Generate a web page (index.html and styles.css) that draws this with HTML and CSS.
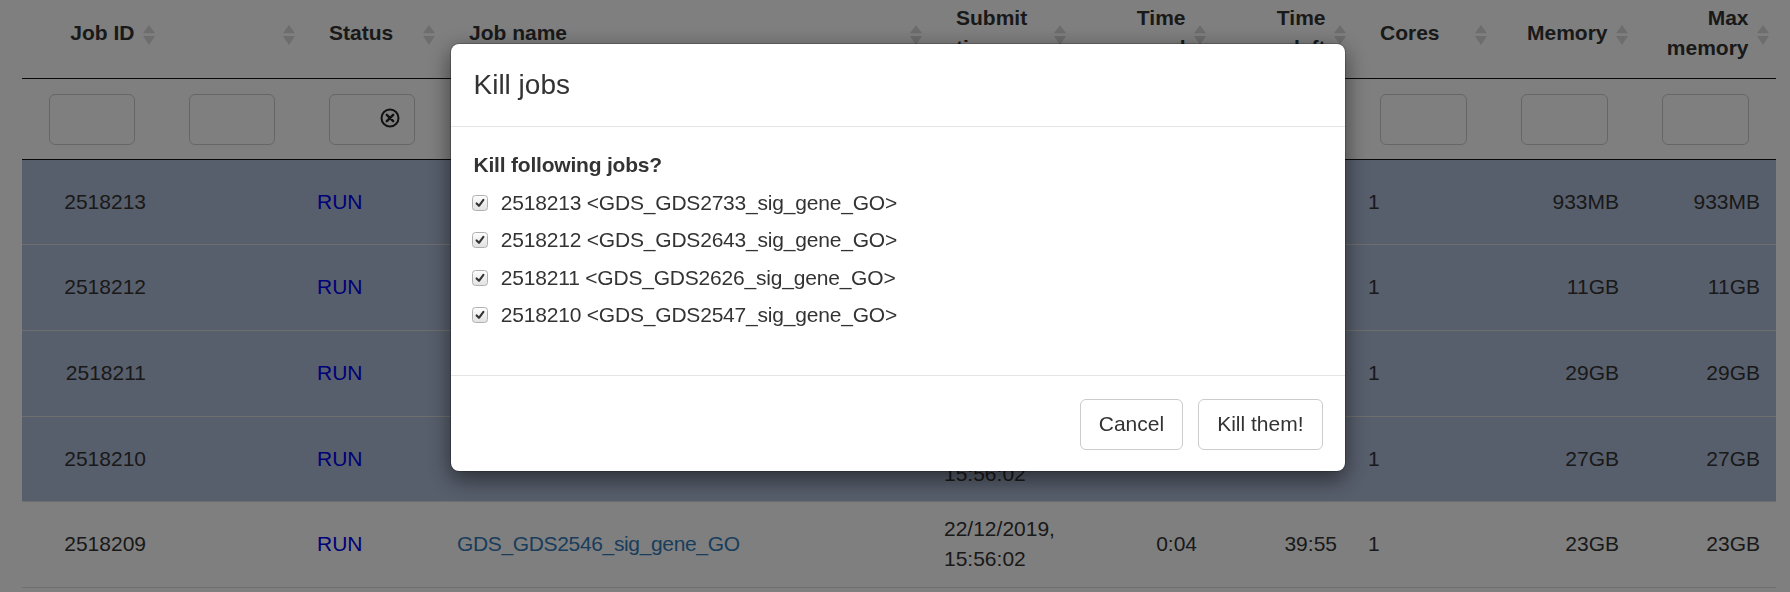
FILE: index.html
```html
<!DOCTYPE html>
<html lang="en">
<head>
<meta charset="utf-8">
<title>Jobs</title>
<link rel="stylesheet" href="styles.css">
</head>
<body>
<div class="page">
  <table class="jobs">
    <colgroup>
      <col style="width:140px"><col style="width:140px"><col style="width:140px"><col style="width:487px"><col style="width:144px"><col style="width:140px"><col style="width:140px"><col style="width:141px"><col style="width:141px"><col style="width:141px">
    </colgroup>
    <thead>
      <tr class="head-row">
        <th><div class="th-inner"><span class="th-label right">Job ID</span><svg class="sort-icon" viewBox="0 0 12 20"><polygon points="6,0 12,8.3 0,8.3"/><polygon points="0,11 12,11 6,20"/></svg></div></th>
        <th><div class="th-inner"><span class="th-label"></span><svg class="sort-icon" viewBox="0 0 12 20"><polygon points="6,0 12,8.3 0,8.3"/><polygon points="0,11 12,11 6,20"/></svg></div></th>
        <th><div class="th-inner"><span class="th-label">Status</span><svg class="sort-icon" viewBox="0 0 12 20"><polygon points="6,0 12,8.3 0,8.3"/><polygon points="0,11 12,11 6,20"/></svg></div></th>
        <th><div class="th-inner"><span class="th-label">Job name</span><svg class="sort-icon" viewBox="0 0 12 20"><polygon points="6,0 12,8.3 0,8.3"/><polygon points="0,11 12,11 6,20"/></svg></div></th>
        <th><div class="th-inner"><span class="th-label">Submit<br>time</span><svg class="sort-icon" viewBox="0 0 12 20"><polygon points="6,0 12,8.3 0,8.3"/><polygon points="0,11 12,11 6,20"/></svg></div></th>
        <th><div class="th-inner"><span class="th-label right">Time<br>used</span><svg class="sort-icon" viewBox="0 0 12 20"><polygon points="6,0 12,8.3 0,8.3"/><polygon points="0,11 12,11 6,20"/></svg></div></th>
        <th><div class="th-inner"><span class="th-label right">Time<br>left</span><svg class="sort-icon" viewBox="0 0 12 20"><polygon points="6,0 12,8.3 0,8.3"/><polygon points="0,11 12,11 6,20"/></svg></div></th>
        <th><div class="th-inner"><span class="th-label">Cores</span><svg class="sort-icon" viewBox="0 0 12 20"><polygon points="6,0 12,8.3 0,8.3"/><polygon points="0,11 12,11 6,20"/></svg></div></th>
        <th><div class="th-inner"><span class="th-label right">Memory</span><svg class="sort-icon" viewBox="0 0 12 20"><polygon points="6,0 12,8.3 0,8.3"/><polygon points="0,11 12,11 6,20"/></svg></div></th>
        <th><div class="th-inner"><span class="th-label right">Max<br>memory</span><svg class="sort-icon" viewBox="0 0 12 20"><polygon points="6,0 12,8.3 0,8.3"/><polygon points="0,11 12,11 6,20"/></svg></div></th>
      </tr>
      <tr class="filter-row">
        <th><input class="filter-input" type="text"></th>
        <th><input class="filter-input" type="text"></th>
        <th><div class="filter-input filter-clear"><svg class="clear-icon" viewBox="0 0 20 20"><circle cx="10" cy="10" r="8.5"/><path d="M6.8 6.8 L13.2 13.2 M13.2 6.8 L6.8 13.2"/></svg></div></th>
        <th></th>
        <th></th>
        <th></th>
        <th></th>
        <th><input class="filter-input" type="text"></th>
        <th><input class="filter-input" type="text"></th>
        <th><input class="filter-input" type="text"></th>
      </tr>
    </thead>
    <tbody>
      <tr class="selected">
        <td class="num">2518213</td><td></td><td class="run">RUN</td><td><a class="job" href="#">GDS_GDS2733_sig_gene_GO</a></td><td>22/12/2019,<br>15:56:02</td><td class="num">0:04</td><td class="num">39:55</td><td>1</td><td class="num">933MB</td><td class="num">933MB</td>
      </tr>
      <tr class="selected">
        <td class="num">2518212</td><td></td><td class="run">RUN</td><td><a class="job" href="#">GDS_GDS2643_sig_gene_GO</a></td><td>22/12/2019,<br>15:56:02</td><td class="num">0:04</td><td class="num">39:55</td><td>1</td><td class="num">11GB</td><td class="num">11GB</td>
      </tr>
      <tr class="selected">
        <td class="num">2518211</td><td></td><td class="run">RUN</td><td><a class="job" href="#">GDS_GDS2626_sig_gene_GO</a></td><td>22/12/2019,<br>15:56:02</td><td class="num">0:04</td><td class="num">39:55</td><td>1</td><td class="num">29GB</td><td class="num">29GB</td>
      </tr>
      <tr class="selected">
        <td class="num">2518210</td><td></td><td class="run">RUN</td><td><a class="job" href="#">GDS_GDS2547_sig_gene_GO</a></td><td>22/12/2019,<br>15:56:02</td><td class="num">0:04</td><td class="num">39:55</td><td>1</td><td class="num">27GB</td><td class="num">27GB</td>
      </tr>
      <tr>
        <td class="num">2518209</td><td></td><td class="run">RUN</td><td><a class="job" href="#">GDS_GDS2546_sig_gene_GO</a></td><td>22/12/2019,<br>15:56:02</td><td class="num">0:04</td><td class="num">39:55</td><td>1</td><td class="num">23GB</td><td class="num">23GB</td>
      </tr>
      <tr>
        <td class="num">2518208</td><td></td><td class="run">RUN</td><td><a class="job" href="#">GDS_GDS2545_sig_gene_GO</a></td><td>22/12/2019,<br>15:56:02</td><td class="num">0:04</td><td class="num">39:55</td><td>1</td><td class="num">21GB</td><td class="num">21GB</td>
      </tr>
    </tbody>
  </table>
</div>

<div class="backdrop"></div>
<div class="modal">
  <div class="modal-dialog">
    <div class="modal-content">
      <div class="modal-header">
        <h4 class="modal-title">Kill jobs</h4>
      </div>
      <div class="modal-body">
        <div class="prompt">Kill following jobs?</div>
        <ul class="job-list">
          <li class="job-item"><span class="cb"><svg class="check" viewBox="0 0 10 10"><path d="M1.6 5.4 L4 7.8 L8.4 1.8"/></svg></span>2518213 &lt;GDS_GDS2733_sig_gene_GO&gt;</li>
          <li class="job-item"><span class="cb"><svg class="check" viewBox="0 0 10 10"><path d="M1.6 5.4 L4 7.8 L8.4 1.8"/></svg></span>2518212 &lt;GDS_GDS2643_sig_gene_GO&gt;</li>
          <li class="job-item"><span class="cb"><svg class="check" viewBox="0 0 10 10"><path d="M1.6 5.4 L4 7.8 L8.4 1.8"/></svg></span>2518211 &lt;GDS_GDS2626_sig_gene_GO&gt;</li>
          <li class="job-item"><span class="cb"><svg class="check" viewBox="0 0 10 10"><path d="M1.6 5.4 L4 7.8 L8.4 1.8"/></svg></span>2518210 &lt;GDS_GDS2547_sig_gene_GO&gt;</li>
        </ul>
      </div>
      <div class="modal-footer">
        <button class="btn" type="button">Cancel</button>
        <button class="btn" type="button">Kill them!</button>
      </div>
    </div>
  </div>
</div>
</body>
</html>
```

FILE: styles.css
```css
html, body {
  margin: 0;
  height: 100%;
  overflow: hidden;
  background: #fff;
}

body {
  font-family: "Liberation Sans", Arial, Helvetica, sans-serif;
  font-size: 21px;
  line-height: 30px;
  color: #333;
}

.page {
  padding-left: 22px;
}

.jobs {
  width: 1754px;
  table-layout: fixed;
  border-collapse: separate;
  border-spacing: 0;
}

.jobs th {
  font-weight: bold;
  text-align: left;
}

.head-row th {
  padding: 3px 7.5px 15px 27px;
  vertical-align: middle;
  border-bottom: 1.5px solid #111;
}

.th-inner {
  display: flex;
  align-items: center;
}

.th-label {
  flex: 1;
  min-width: 0;
}

.th-label.right {
  text-align: right;
}

.sort-icon {
  flex: none;
  width: 12px;
  height: 20px;
  margin-left: 8px;
  margin-top: 4px;
  fill: #dadada;
}

.filter-row th {
  padding: 15px 27px 13.75px;
  vertical-align: middle;
  border-bottom: 1.5px solid #111;
}

.filter-input {
  display: block;
  width: 100%;
  height: 51px;
  box-sizing: border-box;
  margin: 0;
  padding: 0 12px;
  border: 1.5px solid #ccc;
  border-radius: 6px;
  background: #fff;
  font: inherit;
}

.filter-clear {
  display: flex;
  align-items: center;
  justify-content: flex-end;
  padding-right: 14px;
}

.clear-icon {
  width: 20px;
  height: 20px;
  margin-bottom: 3px;
  fill: none;
  stroke: #222;
  stroke-width: 2;
}

.clear-icon path {
  stroke-width: 2.4;
  stroke-linecap: round;
}

.jobs td {
  padding: 12px 16px 12.65px 15px;
  vertical-align: middle;
  border-top: 1px solid #ddd;
  white-space: nowrap;
}

.jobs tbody tr:first-child td {
  border-top: none;
}

.jobs tr.selected td {
  background: #b0bed9;
}

.jobs td.num {
  text-align: right;
}

.run {
  color: #0000f0;
}

.job {
  color: #337ab7;
  text-decoration: none;
  letter-spacing: -0.35px;
}

/* modal */
.backdrop {
  position: fixed;
  inset: 0;
  background: rgba(0, 0, 0, 0.5);
}

.modal {
  position: fixed;
  inset: 0;
}

.modal-dialog {
  width: 896px;
  margin: 43.3px 0 0 450px;
}

.modal-content {
  background: #fff;
  background-clip: padding-box;
  border: 1px solid rgba(0, 0, 0, 0.2);
  border-radius: 9px;
  box-shadow: 0 7.5px 22.5px rgba(0, 0, 0, 0.5);
}

.modal-header {
  padding: 22px 22.5px 21.5px;
  border-bottom: 1px solid #e5e5e5;
}

.modal-title {
  margin: 0;
  font-size: 28px;
  line-height: 38.6px;
  font-weight: normal;
}

.modal-body {
  padding: 23px 22.5px 22.5px;
  letter-spacing: -0.2px;
}

.prompt {
  font-weight: bold;
}

.job-list {
  list-style: none;
  margin: 7.5px 0 22px;
  padding: 0;
  display: flex;
  flex-direction: column;
  gap: 7.5px;
}

.job-item {
  display: flex;
  align-items: center;
  height: 30px;
}

.cb {
  flex: none;
  width: 16px;
  height: 16px;
  box-sizing: border-box;
  margin-left: -1.2px;
  margin-right: 12.5px;
  border: 1px solid #b0b0b0;
  border-radius: 3.5px;
  background: linear-gradient(#fdfdfd, #e2e2e2);
  display: flex;
  align-items: center;
  justify-content: center;
}

.check {
  width: 10px;
  height: 10px;
  fill: none;
  stroke: #333;
  stroke-width: 2.1;
  stroke-linecap: round;
  stroke-linejoin: round;
}

.modal-footer {
  display: flex;
  justify-content: flex-end;
  gap: 15px;
  padding: 23px 22.5px 21.5px;
  border-top: 1px solid #e5e5e5;
}

.btn {
  font-family: inherit;
  font-size: 21px;
  line-height: 30px;
  padding: 9.5px 18px;
  border: 1px solid #ccc;
  border-radius: 6px;
  background: #fff;
  color: #333;
}
```
